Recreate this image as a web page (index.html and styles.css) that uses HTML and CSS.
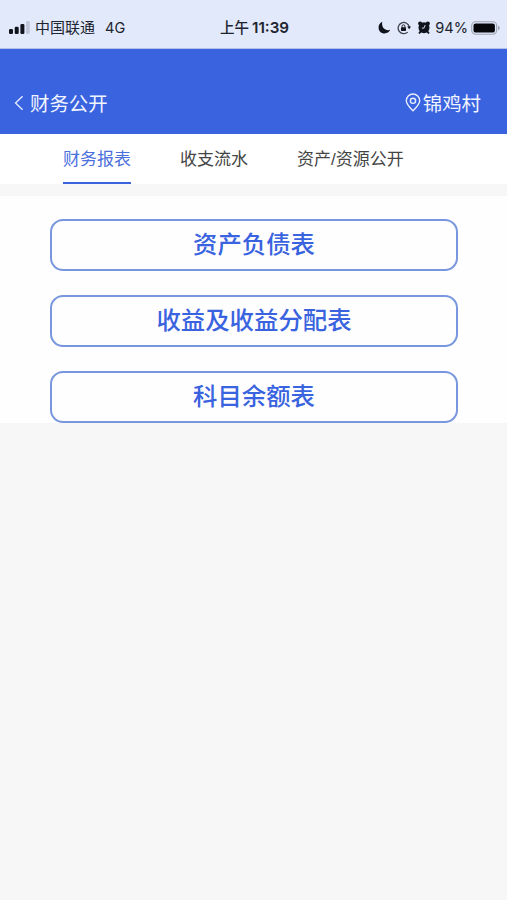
FILE: index.html
```
<!DOCTYPE html>
<html lang="zh-CN">
<head>
    <meta charset="UTF-8">
    <meta name="viewport" content="width=device-width, initial-scale=1.0">
    <title>财务公开</title>
    <link rel="stylesheet" href="styles.css">
</head>
<body>

    <div class="status-bar">
        <div class="status-left">
            <svg class="signal" width="21" height="13" viewBox="0 0 21 13">
                <rect x="0" y="8" width="4" height="5" rx="1.3" fill="#10131c"/>
                <rect x="5.7" y="5.8" width="4" height="7.2" rx="1.3" fill="#10131c"/>
                <rect x="11.4" y="3" width="4" height="10" rx="1.3" fill="#10131c"/>
                <rect x="17.1" y="0" width="3.6" height="13" rx="1.3" fill="#c0c6d6"/>
            </svg>
            <span class="carrier">中国联通</span>
            <span class="network">4G</span>
        </div>
        <div class="clock"><span class="period">上午</span><span class="time">11:39</span></div>
        <div class="status-right">
            <svg class="moon" width="13" height="13" viewBox="0 0 13 13">
                <path d="M4.3 0.8C1.9 1.9 0.4 4.1 0.6 6.9C0.8 10.2 3.3 12.4 6.5 12.4C9 12.4 11.3 11 12.2 8.8C8 10.4 3 7 4.3 0.8Z" fill="#10131c"/>
            </svg>
            <svg class="lock" width="14" height="14" viewBox="0 0 14 14">
                <path d="M12.3 6.1A5.6 5.6 0 1 0 10.7 11.1" fill="none" stroke="#3c414c" stroke-width="1.3"/>
                <path d="M10.2 5.6H14L12.2 8.3Z" fill="#10131c"/>
                <rect x="4" y="6.2" width="5" height="3.7" rx="0.6" fill="#10131c"/>
                <path d="M5.1 6.5V5.2A1.4 1.4 0 0 1 7.9 5.2V6.5" fill="none" stroke="#10131c" stroke-width="0.9"/>
            </svg>
            <svg class="alarm" width="12" height="13" viewBox="0 0 12 13">
                <circle cx="6" cy="6.7" r="5.5" fill="#10131c"/>
                <circle cx="2.2" cy="2.5" r="2.1" fill="#10131c"/>
                <circle cx="9.8" cy="2.5" r="2.1" fill="#10131c"/>
                <path d="M2.7 10.5L1.5 11.8M9.3 10.5L10.5 11.8" stroke="#10131c" stroke-width="1.9" stroke-linecap="round"/>
                <path d="M7.2 4L6 7.1H3.8" fill="none" stroke="#e3eafb" stroke-width="0.9"/>
            </svg>
            <span class="percent">94%</span>
            <svg class="battery" width="29" height="14" viewBox="0 0 29 14">
                <rect x="0.7" y="0.7" width="25" height="12.6" rx="4" fill="none" stroke="#9da3b0" stroke-width="1.1"/>
                <rect x="2.5" y="2.4" width="21.4" height="9.2" rx="2.2" fill="#05070b"/>
                <path d="M27 4.8Q28.8 5.5 28.8 7T27 9.2Z" fill="#9da3b0"/>
            </svg>
        </div>
    </div>

    <div class="header">
        <div class="back">
            <svg width="10" height="16" viewBox="0 0 10 16">
                <path d="M8.6 1.2L1.5 8L8.6 14.8" fill="none" stroke="#e8eeff" stroke-width="1.3"/>
            </svg>
            <span>财务公开</span>
        </div>
        <div class="village">
            <svg width="16" height="19" viewBox="0 0 16 19">
                <path d="M8 17.7C4.5 14.2 1.3 11.2 1.3 7.7A6.7 6.7 0 0 1 14.7 7.7C14.7 11.2 11.5 14.2 8 17.7Z" fill="none" stroke="#e8eeff" stroke-width="1.4"/>
                <circle cx="8" cy="7.8" r="2.6" fill="none" stroke="#e8eeff" stroke-width="1.4"/>
            </svg>
            <span>锦鸡村</span>
        </div>
    </div>

    <div class="tabs">
        <div class="tab active">财务报表</div>
        <div class="tab">收支流水</div>
        <div class="tab">资产<span class="slash">/</span>资源公开</div>
    </div>

    <div class="list">
        <button class="button">资产负债表</button>
        <button class="button">收益及收益分配表</button>
        <button class="button">科目余额表</button>
    </div>

</body>
</html>
```
FILE: styles.css
```
* {
    box-sizing: border-box;
}
body {
    margin: 0;
    font-family: "Noto Sans CJK SC", sans-serif;
    background-color: #f7f7f7;
    color: #444;
}
svg {
    display: block;
    flex: none;
}
.status-bar {
    display: grid;
    grid-template-columns: 1fr auto 1fr;
    align-items: center;
    height: 49px;
    padding: 7px 7px 0 9px;
    background-color: #e2e9fb;
    border-bottom: 1px solid #b3c1ea;
    color: #20242e;
    font-size: 15px;
    line-height: 20px;
}
.status-left, .status-right, .clock {
    display: flex;
    align-items: center;
}
.carrier {
    margin-left: 5px;
    padding-bottom: 2px;
}
.network {
    margin-left: 10px;
    font-family: Inter, sans-serif;
    font-size: 14.5px;
}
.clock {
    font-size: 14.5px;
    font-weight: 500;
}
.period {
    padding-bottom: 2px;
}
.time {
    margin-left: 3px;
    font-family: Inter, sans-serif;
    font-weight: 600;
    font-size: 15.2px;
}
.status-right {
    justify-content: flex-end;
}
.lock {
    margin-left: 6px;
}
.alarm {
    margin-left: 7px;
}
.percent {
    margin-left: 5px;
    font-family: Inter, sans-serif;
    font-size: 14.6px;
}
.battery {
    margin-left: 3px;
}
.header {
    display: flex;
    justify-content: space-between;
    align-items: center;
    height: 85px;
    padding: 22px 26px 0 14px;
    background-color: #3963df;
    color: #f0f4ff;
    font-size: 19.4px;
    line-height: 28px;
}
.back, .village {
    display: flex;
    align-items: center;
}
.back {
    gap: 6px;
}
.village {
    gap: 2px;
}
.tabs {
    display: flex;
    gap: 49px;
    height: 50px;
    padding-left: 63px;
    background-color: #fff;
}
.tab {
    height: 50px;
    font-size: 17px;
    line-height: 48px;
}
.tab.active {
    color: #4b6fdd;
    border-bottom: 2px solid #3963df;
}
.slash {
    font-family: "Liberation Sans", sans-serif;
}
.list {
    display: flex;
    flex-direction: column;
    gap: 24px;
    margin-top: 12px;
    padding: 23px 49px 0 50px;
    background-color: #fefefe;
}
.button {
    height: 52px;
    padding: 0 0 4px;
    border: 2px solid #7897de;
    border-radius: 13px;
    background-color: #fefefe;
    color: #3963df;
    font-family: inherit;
    font-size: 24.4px;
    font-weight: 500;
    line-height: 36px;
}
```
